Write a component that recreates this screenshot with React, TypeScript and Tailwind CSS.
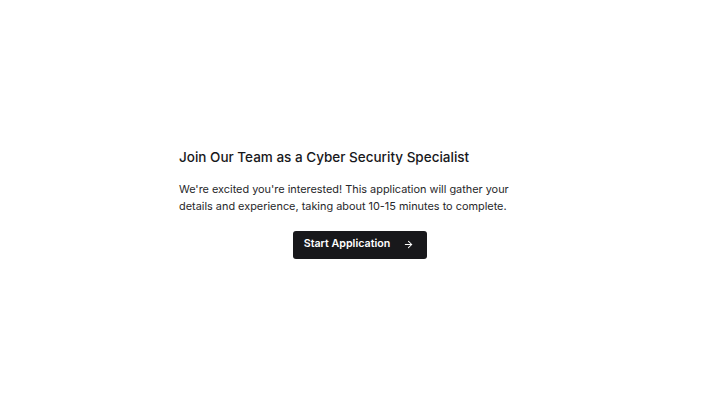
import { ArrowRight } from "lucide-react";

export default function App() {
  return (
    <div
      className="flex min-h-screen items-center justify-center bg-white"
      style={{ fontFamily: "Inter, 'Noto Sans', sans-serif" }}
    >
      <div className="w-[362px]">
        <h1 className="text-[13.5px] font-medium leading-5 text-[#18181b]">
          Join Our Team as a Cyber Security Specialist
        </h1>
        <p className="mt-[14px] text-[10.9px] leading-[17px] text-[#27272a]">
          We're excited you're interested! This application will gather your
          details and experience, taking about 10-15 minutes to complete.
        </p>
        <div className="mt-[16px] flex justify-center">
          <button className="flex h-7 items-center gap-[13px] rounded-[3px] bg-[#18181b] pl-[11px] pr-[13px] text-[10.7px] font-semibold text-white">
            Start Application
            <ArrowRight className="h-[11px] w-[11px]" strokeWidth={2.2} />
          </button>
        </div>
      </div>
    </div>
  );
}
